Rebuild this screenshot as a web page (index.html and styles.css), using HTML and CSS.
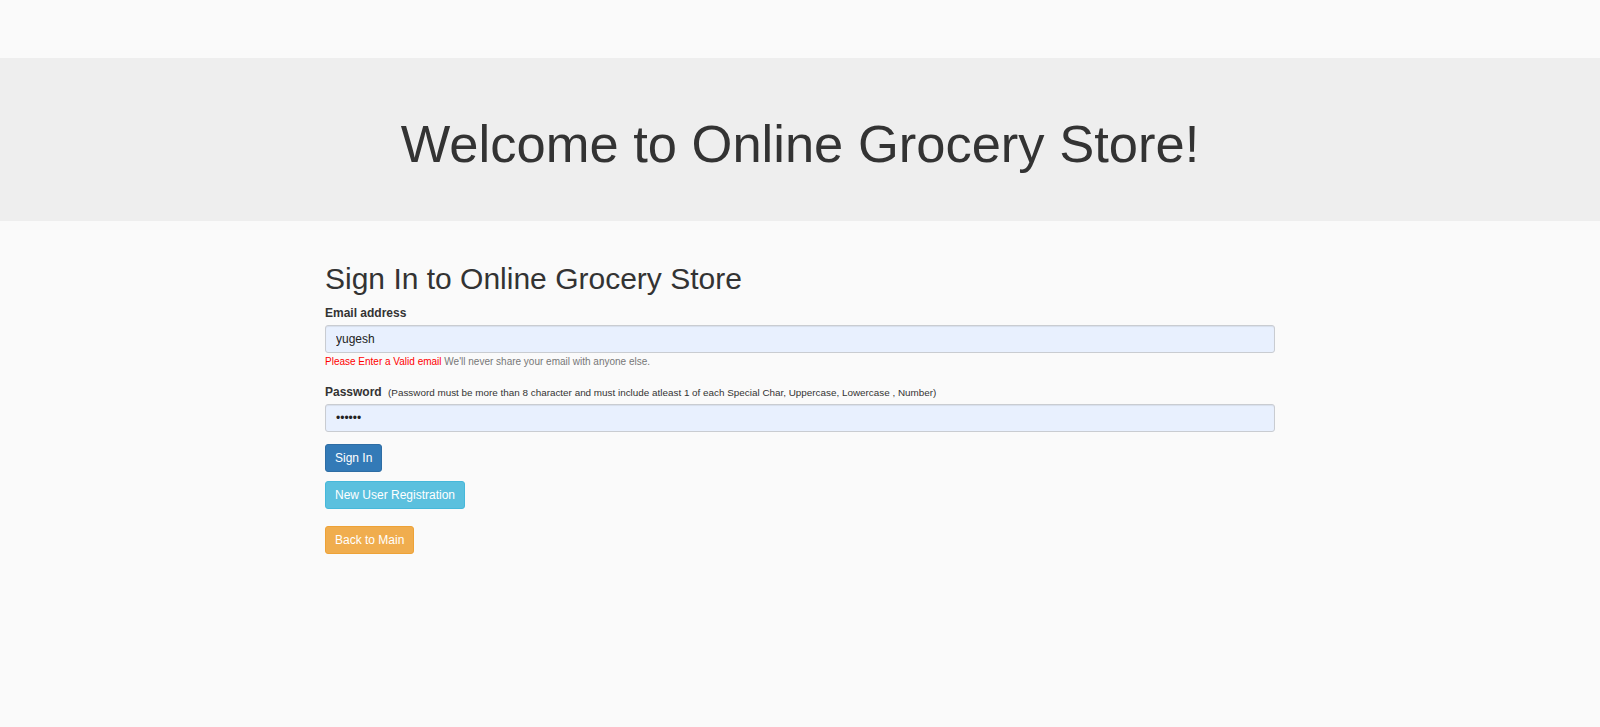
FILE: index.html
```html
<!DOCTYPE html>
<html lang="en">
  <head>
    <meta charset="UTF-8" />
    <meta name="viewport" content="width=device-width, initial-scale=1.0" />
    <title>Sign In - Online Grocery Store</title>
    <link rel="stylesheet" href="styles.css">
  </head>
  <body>
    <!-- Banner -->
    <div class="jumbotron">
      <h1>Welcome to Online Grocery Store!</h1>
    </div>

    <!-- Sign in form -->
    <div class="container">
      <h2>Sign In to Online Grocery Store</h2>
      <form class="signin-form" onsubmit="return false;">
        <div class="form-group">
          <label for="email">Email address</label>
          <input type="text" id="email" class="form-control" value="yugesh" />
          <small class="help-block"><span class="error">Please Enter a Valid email</span> We'll never share your email with anyone else.</small>
        </div>
        <div class="form-group pass-group">
          <label for="password">Password <span class="hint">(Password must be more than 8 character and must include atleast 1 of each Special Char, Uppercase, Lowercase , Number)</span></label>
          <input type="password" id="password" class="form-control" value="yugesh" />
        </div>
        <button type="submit" class="btn btn-primary">Sign In</button>
      </form>
      <div class="links">
        <a href="#" class="btn btn-info">New User Registration</a>
        <a href="#" class="btn btn-warning">Back to Main</a>
      </div>
    </div>
  </body>
</html>
```

FILE: styles.css
```css
/* Reset and basic styles */
* {
  box-sizing: border-box;
}
html,
body {
  height: 100%;
}
body {
  margin: 0;
  padding-top: 58px;
  font-family: "Liberation Sans", Arial, Helvetica, sans-serif;
  font-size: 12px;
  line-height: 1.42857;
  color: #333;
  background: #fafafa;
}
/* Banner */
.jumbotron {
  padding: 30px 0;
  background: #eeeeee;
  text-align: center;
}
.jumbotron h1 {
  margin: 27px 0 18px;
  font-size: 52.5px;
  font-weight: normal;
  line-height: 58px;
  color: #333;
}
/* Page content */
.container {
  width: 950px;
  margin: 0 auto;
  padding-top: 21px;
}
.container h2 {
  margin: 20px 0 10px;
  font-size: 30px;
  font-weight: normal;
  line-height: 33px;
}
/* Form */
.form-group {
  margin-bottom: 15px;
}
.form-group.pass-group {
  margin-bottom: 12px;
}
.form-group label {
  display: block;
  margin-bottom: 3px;
  font-weight: bold;
  line-height: 17px;
}
.form-group .hint {
  margin-left: 3px;
  font-size: 9.9px;
  font-weight: normal;
  color: #333;
}
.form-control {
  display: block;
  width: 100%;
  height: 28px;
  padding: 0 10px;
  font-family: inherit;
  font-size: 12px;
  color: #222;
  background: #e8f0fe;
  border: 1px solid #c9ccd1;
  border-radius: 3px;
  box-shadow: inset 0 1px 1px rgba(0, 0, 0, 0.075);
  outline: none;
}
.help-block {
  display: block;
  margin-top: 2px;
  font-size: 10px;
  line-height: 14px;
  color: #777;
}
.help-block .error {
  color: #ff0000;
}
/* Buttons */
.btn {
  display: inline-block;
  height: 28px;
  padding: 0 9px;
  font-family: inherit;
  font-size: 12px;
  line-height: 26px;
  color: #fff;
  text-decoration: none;
  border: 1px solid transparent;
  border-radius: 3px;
  cursor: pointer;
}
.btn-primary {
  background: #337ab7;
  border-color: #2e6da4;
}
.btn-info {
  background: #5bc0de;
  border-color: #46b8da;
}
.btn-warning {
  background: #f0ad4e;
  border-color: #eea236;
}
.links {
  display: flex;
  flex-direction: column;
  align-items: flex-start;
  margin-top: 9px;
  gap: 17px;
}
```
